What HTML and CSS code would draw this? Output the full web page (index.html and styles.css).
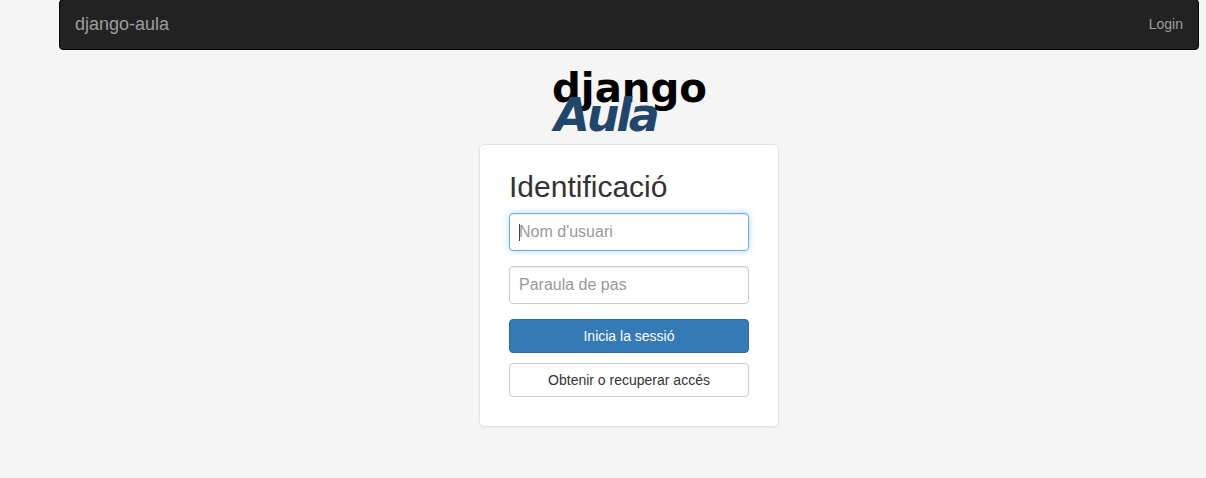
FILE: index.html
```html
<!DOCTYPE html>
<html lang="ca">
<head>
<meta charset="utf-8">
<title>django-aula</title>
<link rel="stylesheet" href="styles.css">
</head>
<body>
<nav class="navbar">
  <a class="brand">django-aula</a>
  <a class="login">Login</a>
</nav>
<main class="main">
  <svg class="logo" width="160" height="74" viewBox="0 0 160 74" role="img">
    <text class="logo-django" x="3" y="42" textLength="155" lengthAdjust="spacingAndGlyphs">django</text>
    <text class="logo-aula" x="5.3" y="71">Aula</text>
  </svg>
  <form class="card">
    <h2 class="title">Identificació</h2>
    <div class="field focused"><span class="caret"></span><span>Nom d'usuari</span></div>
    <div class="field">Paraula de pas</div>
    <button class="btn primary" type="button">Inicia la sessió</button>
    <button class="btn" type="button">Obtenir o recuperar accés</button>
  </form>
</main>
</body>
</html>
```
FILE: styles.css
```css
* { box-sizing: border-box; }
body {
  margin: 0;
  height: 478px;
  overflow: hidden;
  background: #f5f5f5;
  color: #333;
  font: 14px/20px "Liberation Sans", Arial, sans-serif;
}
.navbar {
  display: flex;
  justify-content: space-between;
  align-items: center;
  width: 1140px;
  height: 51px;
  margin: -1px 0 0 59px;
  padding: 0 15px 2px;
  background: #222;
  border: 1px solid #080808;
  border-radius: 4px;
  color: #9d9d9d;
}
.brand { font-size: 18px; }
.main {
  display: flex;
  flex-direction: column;
  align-items: center;
  width: 1140px;
  margin: 10px 0 0 59px;
}
.logo { display: block; margin-bottom: 10px; overflow: visible; }
.logo-django { font: bold 40px "DejaVu Sans", sans-serif; fill: #000; }
.logo-aula { font: italic bold 46px "DejaVu Sans", sans-serif; letter-spacing: -3.2px; fill: #20476b; }
.card {
  width: 300px;
  height: 283px;
  padding: 19px 29px 29px;
  background: #fff;
  border: 1px solid #e5e5e5;
  border-radius: 5px;
  box-shadow: 0 1px 2px rgba(0, 0, 0, .05);
}
.title { margin: 6px 0 10px; font-size: 30px; line-height: 33px; font-weight: 500; }
.field {
  display: flex;
  align-items: center;
  height: 38px;
  margin-bottom: 15px;
  padding: 0 9px;
  background: #fff;
  border: 1px solid #ccc;
  border-radius: 4px;
  box-shadow: inset 0 1px 1px rgba(0, 0, 0, .075);
  color: #999;
  font-size: 16px;
}
.focused {
  border-color: #66afe9;
  box-shadow: inset 0 1px 1px rgba(0, 0, 0, .075), 0 0 6px rgba(102, 175, 233, .5);
}
.caret { width: 1px; height: 17px; margin: 1px -1px 0 0; background: #444; }
.btn {
  display: block;
  width: 100%;
  height: 34px;
  margin: 0 0 10px;
  padding: 6px 12px;
  background: #fff;
  border: 1px solid #ccc;
  border-radius: 4px;
  color: #333;
  font: inherit;
}
.primary { background: #337ab7; border-color: #2e6da4; color: #fff; }
```
